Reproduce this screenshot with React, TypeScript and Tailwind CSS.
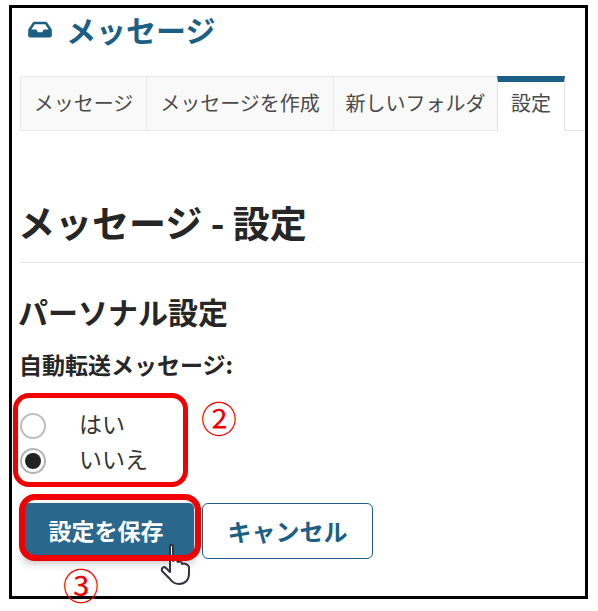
import { FaInbox } from "react-icons/fa";

const jp = "font-['Noto_Sans_CJK_JP','Noto_Sans',sans-serif]";

const tabs = [
  { label: "メッセージ", width: "w-[126px]" },
  { label: "メッセージを作成", width: "w-[187px]" },
  { label: "新しいフォルダ", width: "w-[164px]" },
];

function HandCursor() {
  return (
    <svg className="absolute left-[159px] top-[542px]" width="34" height="44" viewBox="0 0 34 44">
      <path
        d="M11 5c0-3 3-3 3 0v14c2-2 4-1 5 1 2-1 4 0 4 2 2-1 6 0 7 3v7c0 6-4 10-10 10-4 0-7-2-9-5L3 29c-1-3 2-5 4-3l4 4z"
        fill="#fff"
        stroke="#333340"
        strokeWidth="2"
        strokeLinejoin="round"
      />
    </svg>
  );
}

export default function App() {
  return (
    <div className={`relative h-[611px] w-[598px] overflow-hidden bg-white pl-[9px] pt-[5px] ${jp}`}>
      <div className="h-[594px] w-[579px] border-[3px] border-black pl-[8px]">
        <div className="flex h-[68px] items-start pl-[8px] pt-[3px]">
          <FaInbox className="mt-[8px] h-[21px] w-[24px] text-[#1c5f84]" />
          <span className="ml-[14px] text-[30px] font-bold leading-[36px] text-[#1c5f84]">メッセージ</span>
        </div>

        <div className="flex h-[55px] w-[565px] border-b border-[#e5e5e5]">
          {tabs.map((tab) => (
            <div
              key={tab.label}
              className={`${tab.width} flex h-[55px] items-center justify-center border border-r-0 border-[#e8e8e8] bg-[#f9f9f9] pb-[1px] text-[20px] text-[#4a4a4a]`}
            >
              {tab.label}
            </div>
          ))}
          <div className="flex h-[55px] w-[68px] items-center justify-center border-x border-[#e5e5e5] border-t-[6px] border-t-[#1c5f84] bg-white pb-[7px] text-[20px] text-[#4a4a4a]">
            設定
          </div>
        </div>

        <h1 className="-ml-[2px] mt-[67px] text-[37px] font-bold leading-[48px] text-[#262626]">メッセージ - 設定</h1>
        <div className="mt-[16px] h-px w-[565px] bg-[#e5e5e5]" />

        <h2 className="-ml-[2px] mt-[28px] text-[30px] font-bold leading-[40px] text-[#262626]">パーソナル設定</h2>
        <div className="-ml-[1px] mt-[17px] text-[23px] font-bold leading-[32px] text-[#262626]">自動転送メッセージ:</div>

        <div className="mt-[28px] flex h-[35px] items-center">
          <span className="h-[26px] w-[26px] rounded-full border-2 border-[#bdbdbd] bg-white" />
          <span className="ml-[33px] pb-[4px] text-[23px] text-[#333]">はい</span>
        </div>
        <div className="flex h-[35px] items-center">
          <span className="flex h-[26px] w-[26px] items-center justify-center rounded-full border-2 border-[#b5b5b5] bg-white">
            <span className="h-[16px] w-[16px] rounded-full bg-[#222]" />
          </span>
          <span className="ml-[33px] pb-[4px] text-[23px] text-[#333]">いいえ</span>
        </div>

        <div className="ml-[4px] mt-[25px] flex gap-[8px]">
          <button className="h-[55px] w-[170px] rounded-[5px] bg-[#2a678c] pr-[6px] text-[23px] font-bold text-white shadow-[0_4px_10px_rgba(0,0,0,0.3)]">
            設定を保存
          </button>
          <button className="h-[56px] w-[171px] rounded-[6px] border border-[#1c5f84] bg-white text-[24px] font-bold text-[#1c5f84]">
            キャンセル
          </button>
        </div>
      </div>

      {/* annotations drawn over the screenshot */}
      <HandCursor />
      <div className="absolute left-[13px] top-[393px] h-[94px] w-[175px] rounded-[16px] border-[5px] border-[#f00000]" />
      <div className="absolute left-[19px] top-[494px] h-[67px] w-[182px] rounded-[16px] border-[6px] border-[#f00000]" />
      <span className="absolute left-[201px] top-[392px] text-[36px] leading-[50px] text-[#f00000]">②</span>
      <span className="absolute left-[63px] top-[559px] text-[36px] leading-[50px] text-[#f00000]">③</span>
    </div>
  );
}
